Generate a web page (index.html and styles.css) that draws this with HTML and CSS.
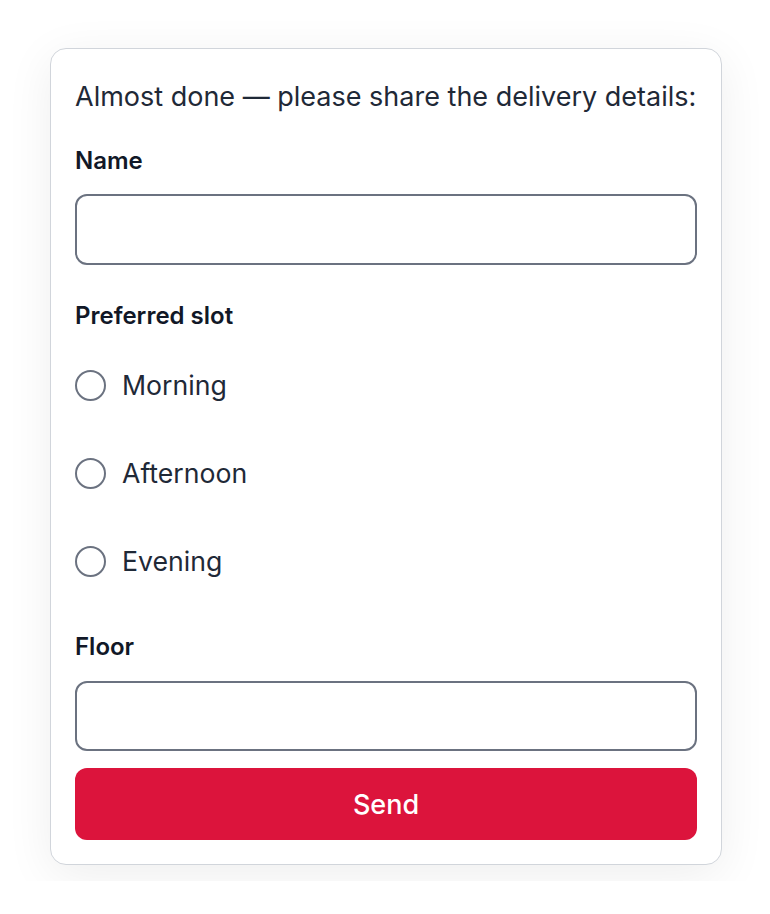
FILE: index.html
```
<!DOCTYPE html>
<html lang="en">
<head>
<meta charset="utf-8">
<link rel="stylesheet" href="styles.css">
</head>
<body>
<div class="stage">
  <form class="card">
    <p class="intro">Almost done — please share the delivery details:</p>
    <label class="label label-name" for="name">Name</label>
    <input class="field" id="name" type="text">
    <div class="label label-slot">Preferred slot</div>
    <div class="options">
      <label class="option"><span class="radio"></span><span class="option-text">Morning</span></label>
      <label class="option"><span class="radio"></span><span class="option-text">Afternoon</span></label>
      <label class="option"><span class="radio"></span><span class="option-text">Evening</span></label>
    </div>
    <label class="label label-floor" for="floor">Floor</label>
    <input class="field" id="floor" type="text">
    <button class="send" type="button">Send</button>
  </form>
</div>
</body>
</html>
```
FILE: styles.css
```
html, body {
  margin: 0;
  padding: 0;
  background: #ffffff;
}
body {
  font-family: Inter, "Noto Sans", sans-serif;
  color: #111827;
}
.stage {
  height: 881px;
  overflow: hidden;
  padding: 48px 48px 0 50px;
  box-sizing: border-box;
}
.card {
  width: 672px;
  box-sizing: border-box;
  border: 1px solid #d1d5db;
  border-radius: 16px;
  background: #ffffff;
  padding: 24px 24px 24px 24px;
  display: flex;
  flex-direction: column;
  box-shadow: 0 10px 48px rgba(0, 0, 0, 0.07);
}
.intro {
  margin: 0;
  font-size: 27px;
  line-height: 48px;
  color: #1f2937;
  white-space: nowrap;
}
.label {
  display: block;
  font-size: 24px;
  font-weight: 600;
  line-height: 30px;
  color: #111827;
}
.label-name { margin-top: 25px; }
.label-slot { margin-top: 36px; }
.label-floor { margin-top: 27px; }
.field {
  margin: 18px 0 0 0;
  height: 71px;
  box-sizing: border-box;
  border: 2px solid #6b7280;
  border-radius: 12px;
  background: #ffffff;
  font: inherit;
  font-size: 24px;
  padding: 0 16px;
  outline: none;
}
#floor { margin-top: 19px; height: 70px; }
.options {
  margin-top: 10px;
  display: flex;
  flex-direction: column;
}
.option {
  height: 88px;
  display: flex;
  align-items: center;
  gap: 16px;
}
.radio {
  width: 31px;
  height: 31px;
  box-sizing: border-box;
  border: 2px solid #6b7280;
  border-radius: 50%;
  flex: none;
}
.option-text {
  font-size: 26.67px;
  color: #1f2937;
}
.send {
  margin-top: 17px;
  height: 72px;
  border: none;
  border-radius: 12px;
  background: #dc143c;
  color: #ffffff;
  font-family: Inter, "Noto Sans", sans-serif;
  font-size: 27px;
  font-weight: 500;
}
```
